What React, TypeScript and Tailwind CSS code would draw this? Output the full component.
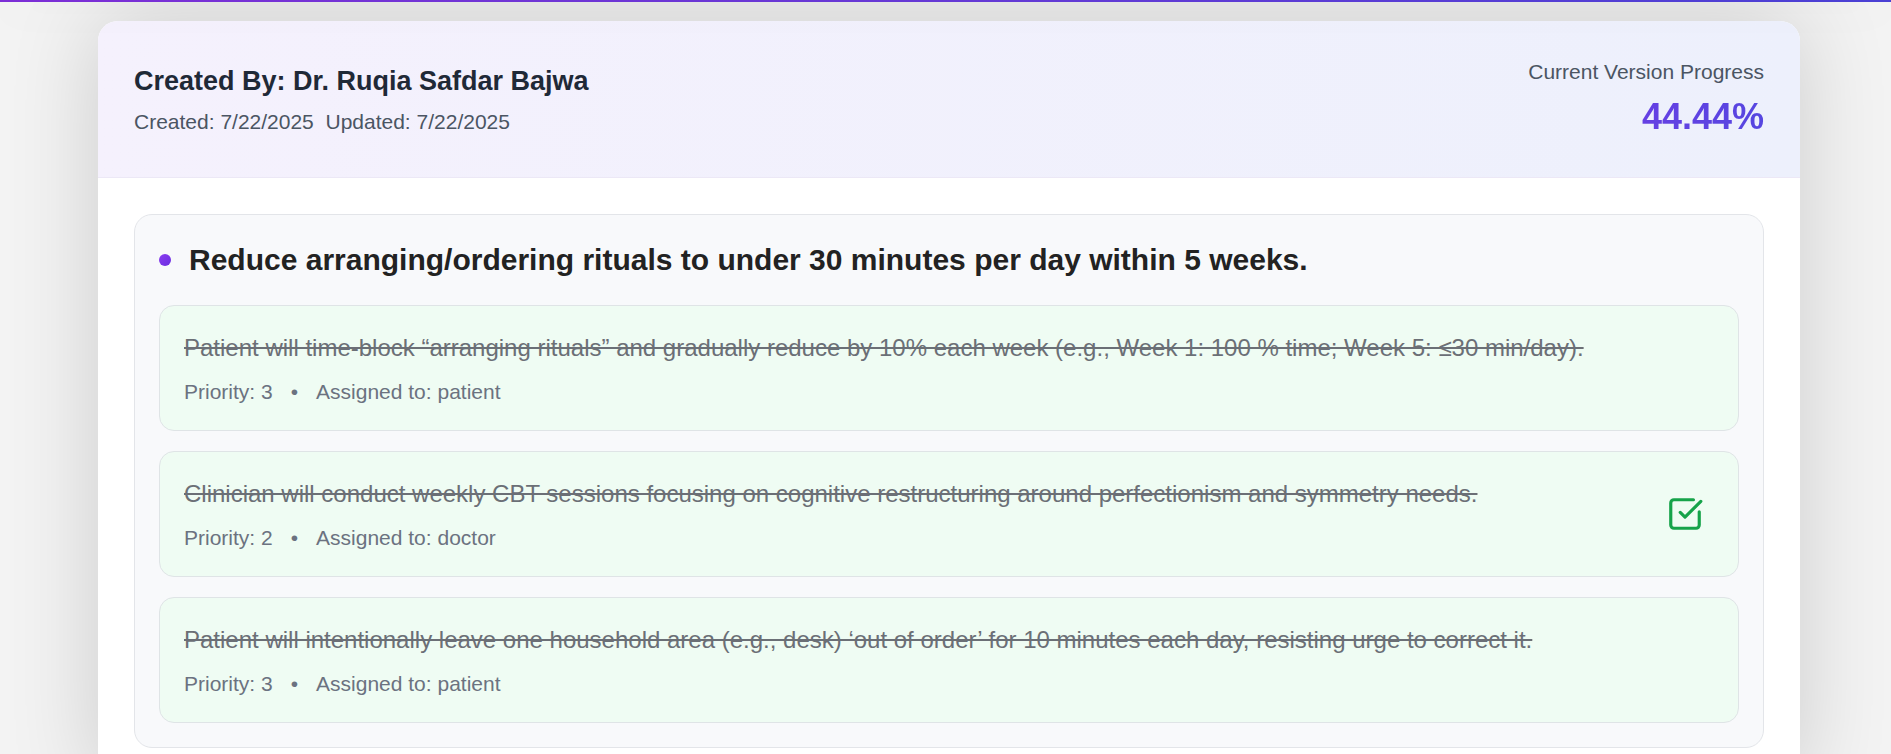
import React from 'react';
import { SquareCheckBig } from 'lucide-react';

interface Task {
  text: string;
  priority: number;
  assignee: string;
  checked?: boolean;
}

const tasks: Task[] = [
  {
    text: 'Patient will time-block \u201carranging rituals\u201d and gradually reduce by 10% each week (e.g., Week 1: 100 % time; Week 5: \u226430 min/day).',
    priority: 3,
    assignee: 'patient'
  },
  {
    text: 'Clinician will conduct weekly CBT sessions focusing on cognitive restructuring around perfectionism and symmetry needs.',
    priority: 2,
    assignee: 'doctor',
    checked: true
  },
  {
    text: 'Patient will intentionally leave one household area (e.g., desk) \u2018out of order\u2019 for 10 minutes each day, resisting urge to correct it.',
    priority: 3,
    assignee: 'patient'
  }
];

const TaskCard: React.FC<{ task: Task }> = ({ task }) => (
  <div className="flex items-center justify-between rounded-[15px] border border-[#dfe4e6] bg-[#effcf3] px-6 py-6">
    <div>
      <p className="text-[24px] leading-[36px] text-[#6b6f76] line-through">{task.text}</p>
      <div className="mt-3 flex items-center text-[21px] leading-[28px] text-[#6b7280]">
        <span>Priority: {task.priority}</span>
        <span className="mx-[18px]">•</span>
        <span>Assigned to: {task.assignee}</span>
      </div>
    </div>
    {task.checked && (
      <SquareCheckBig className="mr-[10px] h-[38px] w-[38px] flex-shrink-0 text-[#16a34a]" strokeWidth={2} />
    )}
  </div>
);

const App: React.FC = () => {
  return (
    <div className="min-h-screen bg-[#f3f3f3] font-['Liberation_Sans',Arial,sans-serif]">
      {/* top progress strip */}
      <div className="relative z-10 h-[2px] bg-linear-to-r from-[#7c2ed6] to-[#4a40d4] shadow-[0_6px_40px_rgba(0,0,0,0.2)]" />

      <div className="ml-[98px] mt-[19px] w-[1702px] overflow-hidden rounded-[20px] bg-white shadow-[0_0_90px_rgba(0,0,0,0.16)]">
        {/* Header */}
        <div className="flex h-[157px] items-start justify-between border-b border-[#ece8f6] bg-linear-to-r from-[#f5f1fd] to-[#edf0fc] px-9">
          <div className="pt-[44px]">
            <h1 className="text-[27px] font-bold leading-[32px] text-[#1f2937]">Created By: Dr. Ruqia Safdar Bajwa</h1>
            <p className="mt-[11px] text-[21px] leading-[28px] text-[#4b5563]">
              Created: 7/22/2025&nbsp;&nbsp;Updated: 7/22/2025
            </p>
          </div>
          <div className="pt-[37px] text-right">
            <p className="text-[21px] leading-[28px] text-[#4b5563]">Current Version Progress</p>
            <p className="mt-[9px] bg-linear-to-r from-[#7239e6] to-[#5646e0] bg-clip-text text-[36px] font-bold leading-[44px] text-transparent">
              44.44%
            </p>
          </div>
        </div>

        {/* Goals */}
        <div className="px-9 pt-9 pb-9">
          <div className="rounded-[18px] border border-[#e3e5e9] bg-[#f8f9fb] p-6">
            <div className="mb-6 flex items-center gap-[18px]">
              <div className="h-[12px] w-[12px] flex-shrink-0 rounded-full bg-linear-to-br from-[#8b3cf0] to-[#6a2ee0]" />
              <h2 className="text-[30px] font-bold leading-[42px] text-[#222222]">
                Reduce arranging/ordering rituals to under 30 minutes per day within 5 weeks.
              </h2>
            </div>
            <div className="flex flex-col gap-5">
              {tasks.map((task, index) => (
                <TaskCard key={index} task={task} />
              ))}
            </div>
          </div>
        </div>
      </div>
    </div>
  );
};

export default App;
